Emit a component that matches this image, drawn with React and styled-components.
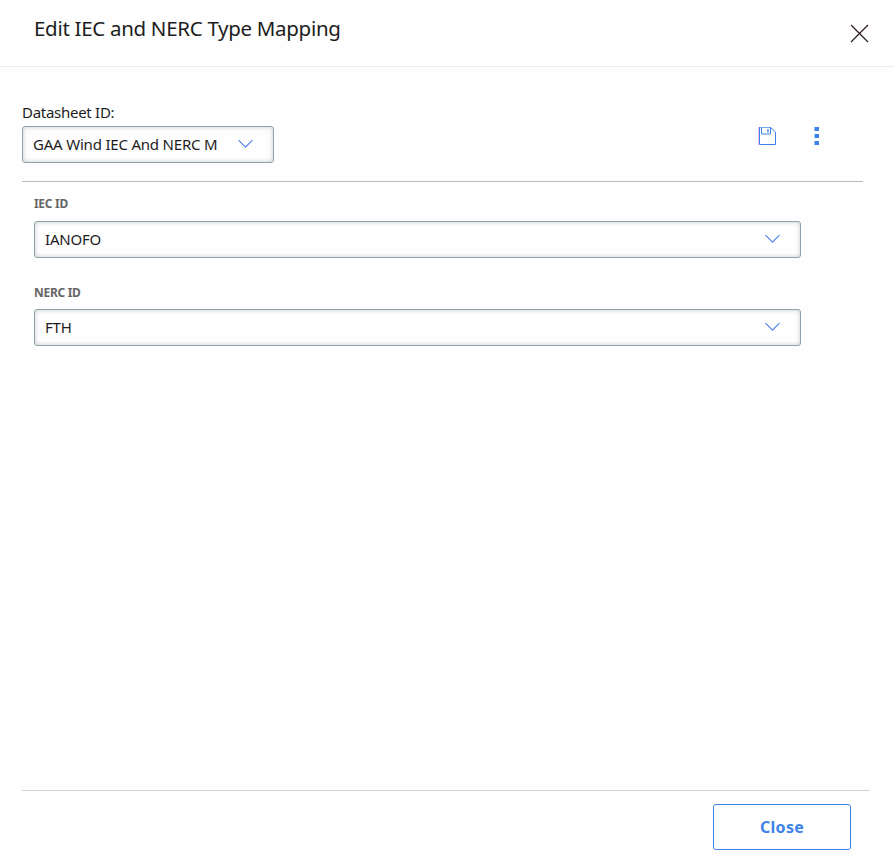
import styled, { createGlobalStyle } from 'styled-components';

const GlobalStyle = createGlobalStyle`
  * {
    box-sizing: border-box;
  }

  body {
    margin: 0;
    background-color: #fefefe;
    color: #1d1d1d;
    font-family: 'Noto Sans', 'Open Sans', sans-serif;
  }

  button {
    font-family: inherit;
    cursor: pointer;
  }
`;

const Dialog = styled.div`
  display: flex;
  flex-direction: column;
  height: 100vh;
  min-height: 863px;
`;

const Header = styled.header`
  display: flex;
  justify-content: space-between;
  height: 67px;
  padding: 14px 25px 0 34px;
  border-bottom: 1px solid #ebebeb;
`;

const Title = styled.h1`
  margin: 0;
  font-size: 20.5px;
  font-weight: 400;
  line-height: 28px;
  letter-spacing: -0.3px;
  white-space: nowrap;
`;

const IconButton = styled.button`
  display: flex;
  padding: 0;
  background: none;
  border: none;

  svg {
    flex-shrink: 0;
  }
`;

const CloseIconButton = styled(IconButton)`
  align-self: flex-start;
  margin-top: 10px;
`;

const Content = styled.main`
  flex: 1;
  padding: 35px 31px 0 22px;
`;

const Toolbar = styled.div`
  display: flex;
  justify-content: space-between;
  height: 80px;
  border-bottom: 1px solid #b9bbbd;
`;

const DatasheetLabel = styled.label`
  display: block;
  height: 24px;
  font-size: 15px;
  line-height: 21px;
  letter-spacing: -0.28px;
  white-space: nowrap;
`;

const Actions = styled.div`
  display: flex;
  align-items: flex-start;
  gap: 36px;
  padding: 24px 44px 0 0;
`;

const SelectBox = styled.button`
  display: flex;
  justify-content: space-between;
  align-items: center;
  width: ${(props) => props.$width};
  height: 37px;
  padding: 0 19px 1px 10px;
  background-color: #fefefe;
  color: inherit;
  border: 1px solid #8fa3ad;
  border-radius: 3px;
  box-shadow: inset 0 0 5px rgba(0, 0, 0, 0.2);
`;

const SelectValue = styled.span`
  font-size: 15px;
  line-height: 20px;
  letter-spacing: -0.2px;
  white-space: nowrap;
`;

const Field = styled.div`
  padding: 12px 62px 0 12px;

  & + & {
    padding-top: 25px;
  }
`;

const FieldLabel = styled.label`
  display: block;
  height: ${(props) => props.$height};
  color: #666;
  font-size: 12px;
  font-weight: 700;
  line-height: 20px;
  letter-spacing: -0.3px;
`;

const Footer = styled.footer`
  display: flex;
  justify-content: flex-end;
  height: 73px;
  margin: 0 24px 0 22px;
  padding: 13px 19px 0 0;
  border-top: 1px solid #d4d4d4;
`;

const CloseButton = styled.button`
  width: 138px;
  height: 46px;
  padding: 0;
  background-color: #fefefe;
  color: #3f83e8;
  border: 1px solid #3f83e8;
  border-radius: 3px;
  font-size: 16px;
  font-weight: 700;
  letter-spacing: 0.3px;
`;

function Chevron() {
  return (
    <svg width="16" height="10" viewBox="0 0 16 10" fill="none" stroke="#5583ee" strokeWidth="1.15">
      <path d="M.5 1.200l7 7 7-7" />
    </svg>
  );
}

function CloseIcon() {
  return (
    <svg width="19" height="19" viewBox="0 0 19 19" fill="none" stroke="#2b1a22" strokeWidth="1.2">
      <path d="M1 1l17 17M18 1L1 18" />
    </svg>
  );
}

function SaveIcon() {
  return (
    <svg width="20" height="19" viewBox="0 0 20 19" fill="none" stroke="#3f83e8">
      <path d="M.5 1v18" stroke="#ecc4f0" />
      <path d="M1 1.500h12" stroke="#7ba8ee" />
      <path d="M12.500 1.500l5 4.500v12.500h-16V1" />
      <path d="M3.500 1.500v6.500h9v-6.500" />
      <path d="M10 3v3.500" strokeWidth="2" stroke="#7ba8ee" />
    </svg>
  );
}

function MoreIcon() {
  return (
    <svg width="5" height="19" viewBox="0 0 5 19" fill="#3f83e8">
      <path d="M.5 1H5v4H.5zM.5 8H5v4H.5zM.5 15H5v4H.5z" />
    </svg>
  );
}

function Select({ value, width = '100%', label }) {
  return (
    <SelectBox type="button" $width={width} aria-label={label}>
      <SelectValue>{value}</SelectValue>
      <Chevron />
    </SelectBox>
  );
}

const fields = [
  { label: 'IEC ID', value: 'IANOFO', labelHeight: '27px' },
  { label: 'NERC ID', value: 'FTH', labelHeight: '26px' },
];

function App() {
  return (
    <>
      <GlobalStyle />
      <Dialog role="dialog">
        <Header>
          <Title>Edit IEC and NERC Type Mapping</Title>
          <CloseIconButton aria-label="Close dialog">
            <CloseIcon />
          </CloseIconButton>
        </Header>
        <Content>
          <Toolbar>
            <div>
              <DatasheetLabel>Datasheet ID:</DatasheetLabel>
              <Select value="GAA Wind IEC And NERC M" width="252px" label="Datasheet ID" />
            </div>
            <Actions>
              <IconButton aria-label="Save">
                <SaveIcon />
              </IconButton>
              <IconButton aria-label="More options">
                <MoreIcon />
              </IconButton>
            </Actions>
          </Toolbar>
          {fields.map((field) => (
            <Field key={field.label}>
              <FieldLabel $height={field.labelHeight}>{field.label}</FieldLabel>
              <Select value={field.value} label={field.label} />
            </Field>
          ))}
        </Content>
        <Footer>
          <CloseButton type="button">Close</CloseButton>
        </Footer>
      </Dialog>
    </>
  );
}

export default App;
